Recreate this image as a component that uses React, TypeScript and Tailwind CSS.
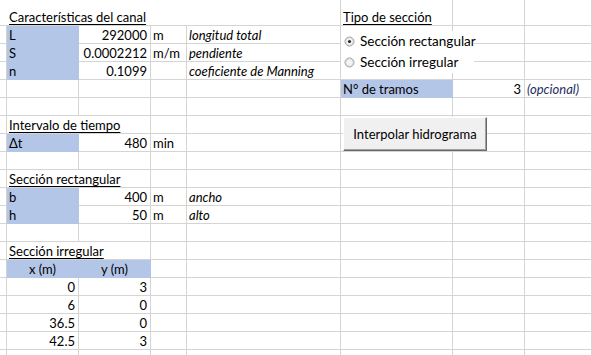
import React from "react";

type Cell = {
  t?: string;
  span?: 1 | 2 | 4;
  fill?: boolean;
  align?: "r" | "c";
  it?: boolean;
  u?: boolean;
  nb?: boolean;
  navy?: boolean;
};

const spanCls: Record<number, string> = {
  1: "col-span-1",
  2: "col-span-2",
  4: "col-span-4",
};

const E: Cell = {};
const edge: Cell = {};
const blank: Cell[] = [edge, E, E, E, E, E, E, E];

const rows: Cell[][] = [
  [{ nb: true }, { t: "Características del canal", u: true, span: 4 }, { t: "Tipo de sección", u: true }, E, E],
  [edge, { t: "L", fill: true }, { t: "292000", align: "r" }, { t: "m" }, { t: "longitud total", it: true }, E, E, E],
  [edge, { t: "S", fill: true }, { t: "0.0002212", align: "r" }, { t: "m/m" }, { t: "pendiente", it: true }, E, E, E],
  [edge, { t: "n", fill: true }, { t: "0.1099", align: "r" }, E, { t: "coeficiente de Manning", it: true }, E, E, E],
  [edge, E, E, E, E, { t: "N° de tramos", fill: true }, { t: "3", align: "r" }, { t: "(opcional)", it: true, navy: true }],
  blank,
  [edge, { t: "Intervalo de tiempo", u: true, span: 2 }, E, E, E, E, E],
  [edge, { t: "Δt", fill: true }, { t: "480", align: "r" }, { t: "min" }, E, E, E, E],
  blank,
  [edge, { t: "Sección rectangular", u: true, span: 2 }, E, E, E, E, E],
  [edge, { t: "b", fill: true }, { t: "400", align: "r" }, { t: "m" }, { t: "ancho", it: true }, E, E, E],
  [edge, { t: "h", fill: true }, { t: "50", align: "r" }, { t: "m" }, { t: "alto", it: true }, E, E, E],
  blank,
  [edge, { t: "Sección irregular", u: true, span: 2 }, E, E, E, E, E],
  [edge, { t: "x (m)", fill: true, align: "c" }, { t: "y (m)", fill: true, align: "c" }, E, E, E, E, E],
  [edge, { t: "0", align: "r" }, { t: "3", align: "r" }, E, E, E, E, E],
  [edge, { t: "6", align: "r" }, { t: "0", align: "r" }, E, E, E, E, E],
  [edge, { t: "36.5", align: "r" }, { t: "0", align: "r" }, E, E, E, E, E],
  [edge, { t: "42.5", align: "r" }, { t: "3", align: "r" }, E, E, E, E, E],
  blank,
];

function GridCell({ c }: { c: Cell }) {
  const justify = c.align === "r" ? "justify-end pr-[3px]" : c.align === "c" ? "justify-center" : "justify-start pl-[2px]";
  return (
    <div
      className={`${spanCls[c.span ?? 1]} flex items-end pb-[1px] whitespace-nowrap border-b ${
        c.nb ? "" : "border-r"
      } ${c.fill ? "bg-[#b4c6e7] border-[#b4c6e7]" : "border-[#d4d4d4]"} ${justify} ${c.it ? "italic" : ""} ${
        c.u ? "underline underline-offset-[2px]" : ""
      } ${c.navy ? "text-[#1f2f5f]" : "text-black"}`}
    >
      {c.t}
    </div>
  );
}

function Radio({ on }: { on?: boolean }) {
  return (
    <svg width="11" height="11" viewBox="0 0 11 11" className="shrink-0">
      <circle cx="5.5" cy="5.5" r="4.5" fill="#f4f4f4" stroke="#9a9a9a" />
      <circle cx="5.5" cy="5.5" r="3.5" fill="none" stroke="#dcdcdc" />
      {on && <circle cx="5.5" cy="5.5" r="1.6" fill="#2a2a2a" />}
    </svg>
  );
}

export default function App() {
  return (
    <div className="relative w-[592px] h-[355px] overflow-hidden bg-white font-['Lato',sans-serif] text-[13px] leading-none">
      <div className="grid grid-cols-[7px_72px_72px_36px_154px_112px_72px_1fr] grid-rows-[26px_repeat(19,18px)]">
        {rows.map((r, i) => r.map((c, j) => <GridCell key={`${i}-${j}`} c={c} />))}
      </div>

      {/* option group */}
      <div className="absolute left-[341px] top-[31px] w-[133px] h-[42px] bg-white flex flex-col justify-center gap-[7px] pl-[3px] whitespace-nowrap text-[13.5px]">
        <div className="flex items-center gap-[5px]">
          <Radio on />
          <span>Sección rectangular</span>
        </div>
        <div className="flex items-center gap-[5px]">
          <Radio />
          <span>Sección irregular</span>
        </div>
      </div>

      <button className="absolute left-[343px] top-[117px] w-[144px] h-[34px] bg-[#f0f0f0] border border-t-white border-l-white border-r-[#696969] border-b-[#696969] shadow-[inset_-1px_-1px_0_#a0a0a0] text-black text-[13px]">
        Interpolar hidrograma
      </button>
    </div>
  );
}
